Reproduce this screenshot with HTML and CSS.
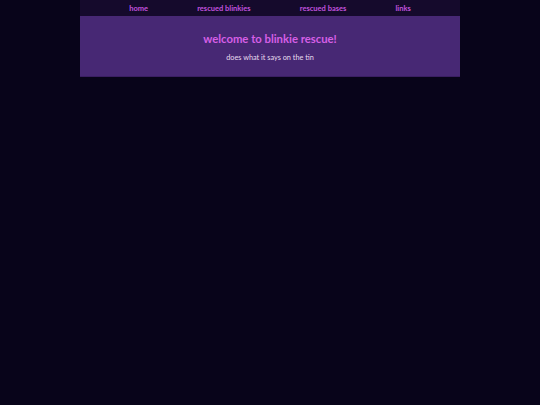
FILE: index.html
```html
<!DOCTYPE html>
<html>
<head>
<meta charset="utf-8">
<link rel="stylesheet" href="styles.css">
</head>
<body>
<div class="wrap">
  <nav class="nav">
    <a href="#">home</a>
    <a href="#">rescued blinkies</a>
    <a href="#">rescued bases</a>
    <a href="#">links</a>
  </nav>
  <header class="head">
    <h1 class="title">welcome to blinkie rescue!</h1>
    <p class="sub">does what it says on the tin</p>
  </header>
</div>
</body>
</html>
```
FILE: styles.css
```css
html, body { margin: 0; padding: 0; }
body {
  background: #08041a;
  font-family: "Lato", "Noto Sans", sans-serif;
  width: 540px;
  height: 405px;
}
.wrap {
  width: 380px;
  margin: 0 auto;
}
.nav {
  display: flex;
  justify-content: space-evenly;
  align-items: center;
  height: 16px;
  background: #150a2c;
}
.nav a {
  color: #c252df;
  text-decoration: none;
  font-size: 7.5px;
  font-weight: bold;
}
.head {
  background: #472874;
  border-bottom: 1px solid #3a1f62;
  height: 60px;
  display: flex;
  flex-direction: column;
  align-items: center;
}
.title {
  margin: 16px 0 0;
  font-size: 11.3px;
  font-weight: bold;
  color: #d65fe6;
  line-height: 14px;
}
.sub {
  margin: 7px 0 0;
  font-size: 7.3px;
  color: #e8dcef;
  line-height: 9px;
}
```
